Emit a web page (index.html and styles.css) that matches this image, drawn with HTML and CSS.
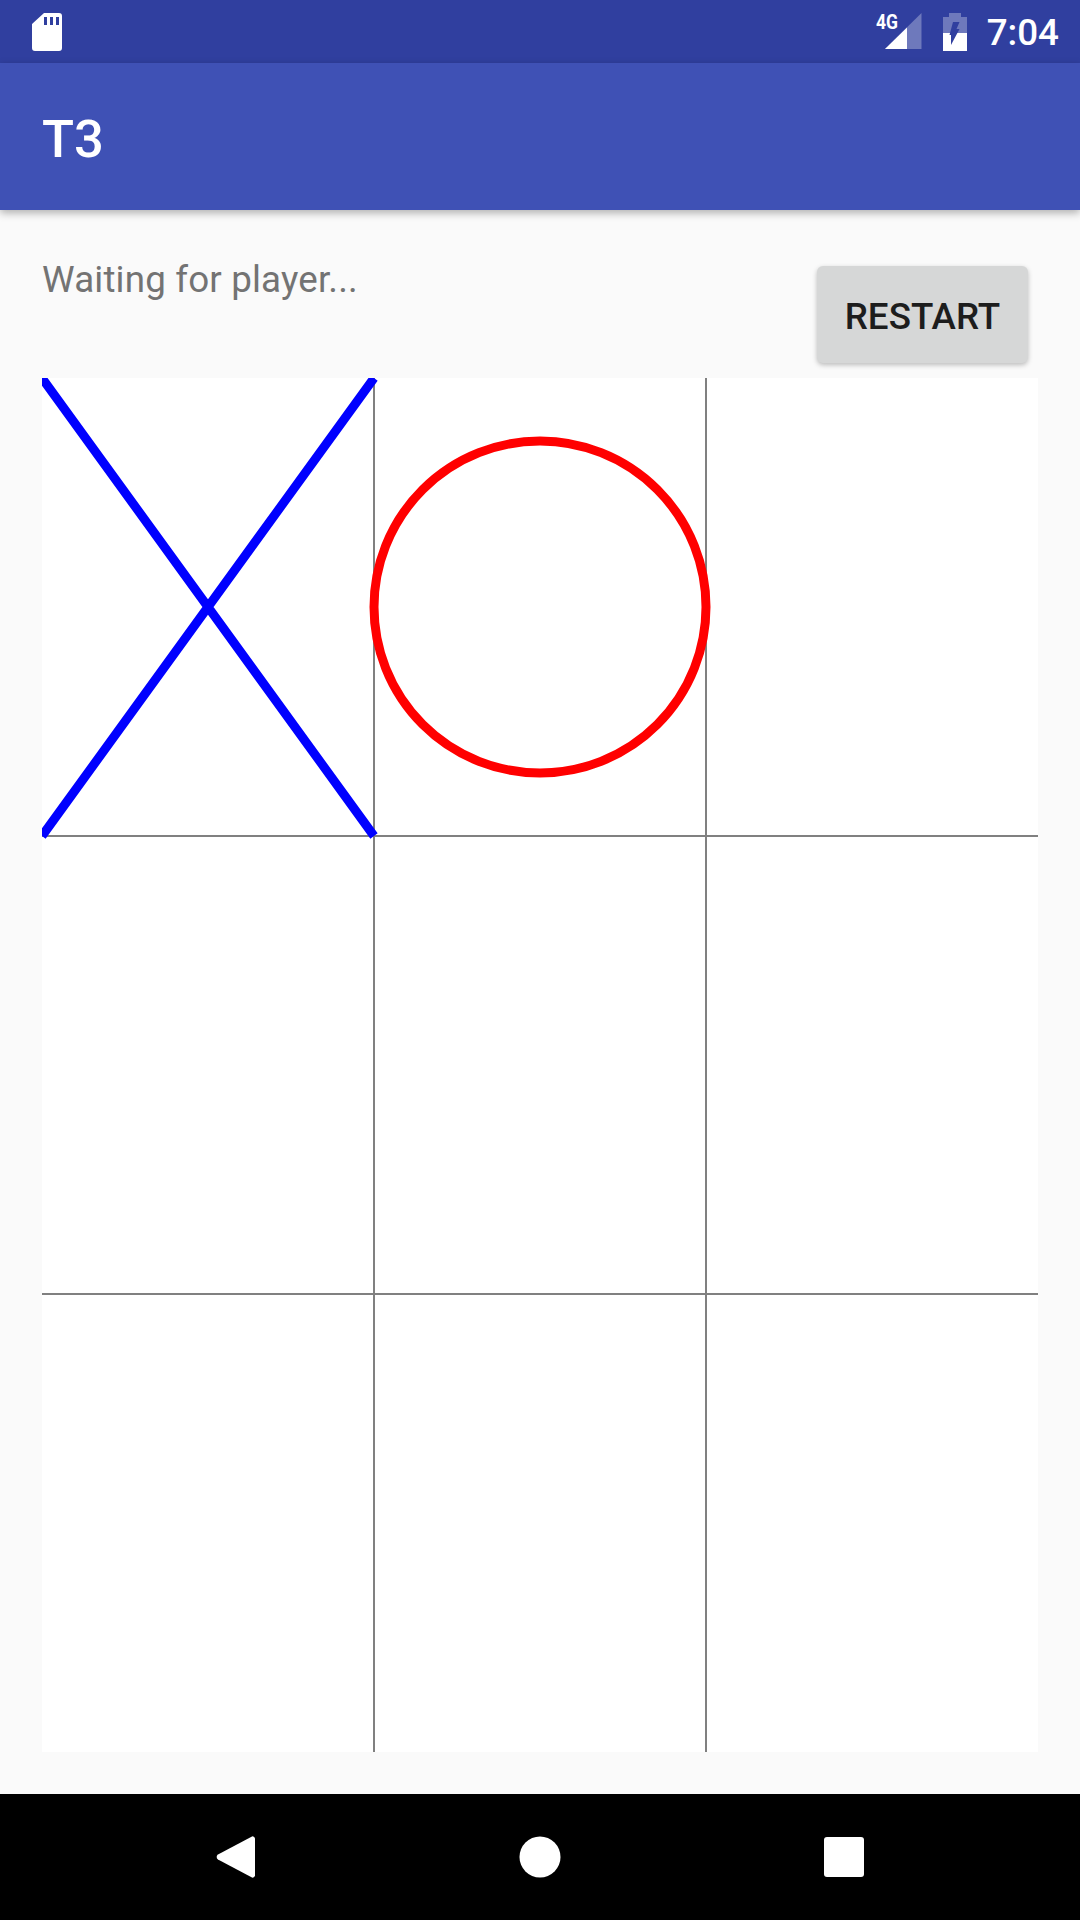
FILE: index.html
```html
<!DOCTYPE html>
<html>

<head>
    <meta charset="UTF-8">
    <title>T3</title>
    <link rel="stylesheet" href="styles.css">
</head>

<body>
    <div class="phone">
        <div class="statusBar">
            <svg class="sdIcon" viewBox="0 0 30 38">
                <path fill="#fff" fill-rule="evenodd" d="M12 0H27a3 3 0 0 1 3 3V35a3 3 0 0 1-3 3H3a3 3 0 0 1-3-3V11zM12 4V12H15V4zM18 4V12H21V4zM24 4V12H27V4z" />
            </svg>
            <div class="statusRight">
                <svg class="signalIcon" viewBox="0 0 46 49">
                    <path fill="#fff" fill-opacity="0.3" d="M31 42H9L45.5 6V42z" />
                    <path fill="#fff" d="M9 42L31 20.500V42z" />
                    <text class="signalText" x="0" y="21.500" textLength="22" lengthAdjust="spacingAndGlyphs">4G</text>
                </svg>
                <svg class="batteryIcon" viewBox="0 0 24 38">
                    <path fill="#fff" fill-opacity="0.3" d="M6 0H18V4H24V20H0V4H6z" />
                    <path fill="#fff" d="M0 20H24V38H0z" />
                    <path fill="#303F9F" d="M10 9H16.500L13.500 16H16.500L8 32V22H6.500z" />
                </svg>
                <span class="clock">7:04</span>
            </div>
        </div>

        <div class="appBar">T3</div>

        <div class="content">
            <div class="topRow">
                <span class="statusText">Waiting for player...</span>
                <button class="restartButton">RESTART</button>
            </div>

            <svg class="board" viewBox="0 0 996 1374">
                <!-- grid lines -->
                <path class="gridLine" d="M332 0V1374M664 0V1374M0 458H996M0 916H996" />
                <!-- marks -->
                <path class="markX" d="M0 0L332 458M332 0L0 458" />
                <circle class="markO" cx="498" cy="229" r="166" />
            </svg>
        </div>

        <div class="navBar">
            <svg class="navIcon backIcon" viewBox="0 0 40 42">
                <path fill="#fff" d="M36 0.400a2.500 2.500 0 0 1 3 2.400V39.200a2.500 2.500 0 0 1-3 2.400L2 23.500a3 3 0 0 1 0-5z" />
            </svg>
            <svg class="navIcon homeIcon" viewBox="0 0 44 44">
                <circle fill="#fff" cx="22" cy="22" r="21.500" />
            </svg>
            <svg class="navIcon recentIcon" viewBox="0 0 40 40">
                <rect fill="#fff" width="40" height="40" rx="3" />
            </svg>
        </div>
    </div>
</body>

</html>
```

FILE: styles.css
```css
body {
    margin: 0;
    font-family: Roboto, "Liberation Sans", sans-serif;
    background-color: #FAFAFA;
}

.phone {
    display: flex;
    flex-direction: column;
    width: 1080px;
    height: 1920px;
    overflow: hidden;
}

/* Status bar */
.statusBar {
    display: flex;
    justify-content: space-between;
    align-items: center;
    height: 63px;
    padding: 0 21px 0 32px;
    background-color: #303F9F;
}

.sdIcon {
    width: 30px;
    height: 38px;
}

.statusRight {
    display: flex;
    align-items: center;
}

.signalIcon {
    width: 46px;
    height: 49px;
    margin-right: 21px;
}

.signalText {
    font-size: 20px;
    font-weight: 700;
    fill: #fff;
}

.batteryIcon {
    width: 24px;
    height: 38px;
    margin-right: 20px;
}

.clock {
    padding-top: 2px;
    font-size: 36.75px;
    font-weight: 500;
    color: #fff;
}

/* App bar */
.appBar {
    position: relative;
    display: flex;
    align-items: center;
    height: 143px;
    padding: 4px 0 0 42px;
    font-size: 52.5px;
    font-weight: 500;
    color: #fff;
    background-color: #3F51B5;
    box-shadow: 0 3px 8px rgba(0, 0, 0, 0.3);
}

/* Main area */
.content {
    flex: 1;
    display: flex;
    flex-direction: column;
    padding: 0 42px;
}

.topRow {
    display: flex;
    justify-content: space-between;
    align-items: flex-start;
    height: 168px;
}

.statusText {
    margin-top: 48px;
    font-size: 36.75px;
    letter-spacing: 0.16px;
    color: #737373;
}

.restartButton {
    width: 211px;
    height: 97px;
    margin: 56px 10px 0 0;
    padding: 4px 0 0;
    border: none;
    border-radius: 6px;
    font-family: inherit;
    font-size: 36.75px;
    font-weight: 500;
    color: #1D1D1D;
    background-color: #D6D7D7;
    box-shadow: 0 2px 5px rgba(0, 0, 0, 0.25);
}

.board {
    display: block;
    width: 996px;
    height: 1374px;
    background-color: #fff;
}

.gridLine {
    fill: none;
    stroke: #808080;
    stroke-width: 2;
}

.markX {
    fill: none;
    stroke: #0000FF;
    stroke-width: 9;
}

.markO {
    fill: none;
    stroke: #FF0000;
    stroke-width: 9;
}

/* Nav bar */
.navBar {
    position: relative;
    height: 126px;
    background-color: #000;
}

.navIcon {
    position: absolute;
    top: 42px;
    height: 42px;
}

.backIcon {
    left: 216px;
    width: 40px;
}

.homeIcon {
    left: 518px;
    width: 44px;
}

.recentIcon {
    left: 824px;
    width: 40px;
    height: 40px;
    top: 43px;
}
```
